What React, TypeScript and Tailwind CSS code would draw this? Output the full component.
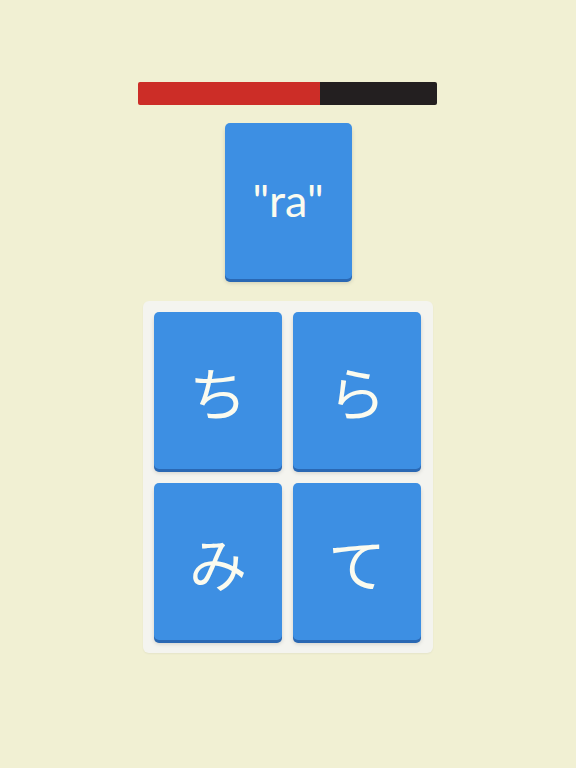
const choices = ["ち", "ら", "み", "て"];

function Card({ children, className = "" }: { children: React.ReactNode; className?: string }) {
  return (
    <div
      className={`flex items-center justify-center rounded-[5px] bg-[#3d8fe3] text-[#fbfbef] shadow-[0_3px_0_#2a68b3,0_4px_4px_rgba(0,0,0,0.15)] ${className}`}
    >
      {children}
    </div>
  );
}

export default function App() {
  return (
    <div className="flex h-[768px] w-[576px] flex-col items-center bg-[#f1f0d3] pt-[82px] font-['Lato','Noto_Sans_CJK_JP',sans-serif]">
      <div className="ml-[-2px] flex h-[23px] w-[299px] overflow-hidden rounded-[2px]">
        <div className="w-[182px] bg-[#cc2d27]" />
        <div className="flex-1 bg-[#231f20]" />
      </div>

      <Card className="mt-[18px] h-[156px] w-[127px]">
        <span className="mt-[-2px] text-[45px] leading-none">"ra"</span>
      </Card>

      <div className="mt-[22px] grid grid-cols-[128px_128px] gap-x-[11px] gap-y-[14px] rounded-[6px] bg-[#f4f4ef] pb-[13px] pl-[11px] pr-[12px] pt-[11px] shadow-[0_1px_2px_rgba(0,0,0,0.05)]">
        {choices.map((c) => (
          <Card key={c} className="h-[157px]">
            <span className="font-['Noto_Sans_CJK_JP',sans-serif] text-[58px] font-normal leading-none">{c}</span>
          </Card>
        ))}
      </div>
    </div>
  );
}
